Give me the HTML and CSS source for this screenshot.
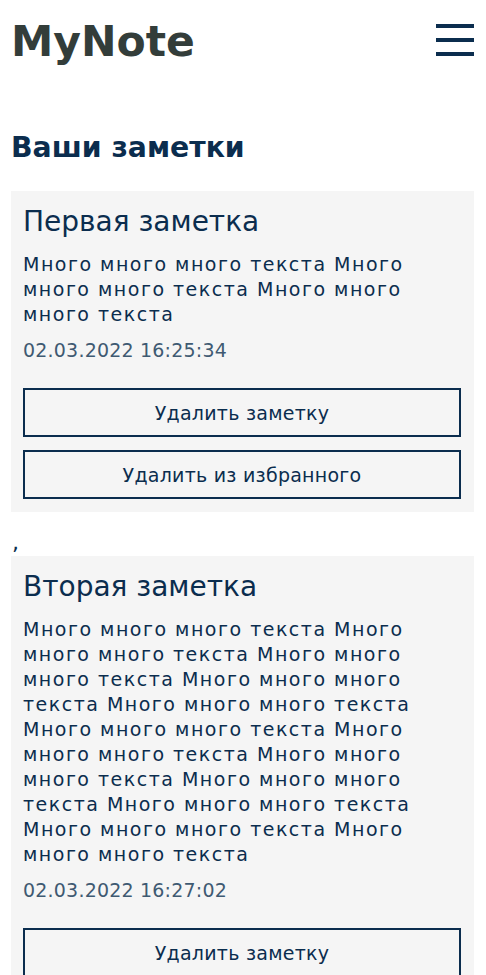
FILE: index.html
```html
<!DOCTYPE html>
<html lang="ru">
<head>
<meta charset="utf-8">
<title>MyNote</title>
<link rel="stylesheet" href="styles.css">
</head>
<body>
<header class="header">
  <h1 class="logo">MyNote</h1>
  <button class="burger" aria-label="Меню">
    <span class="burger-line"></span>
    <span class="burger-line"></span>
    <span class="burger-line"></span>
  </button>
</header>
<main class="content">
  <h2 class="section-title">Ваши заметки</h2>
  <div class="notes">
    <article class="note">
      <h3 class="note-title">Первая заметка</h3>
      <p class="note-text">Много много много текста Много много много текста Много много много текста</p>
      <p class="note-date">02.03.2022 16:25:34</p>
      <div class="note-actions">
        <button class="btn">Удалить заметку</button>
        <button class="btn">Удалить из избранного</button>
      </div>
    </article>
    <span class="sep">,</span>
    <article class="note">
      <h3 class="note-title">Вторая заметка</h3>
      <p class="note-text">Много много много текста Много много много текста Много много много текста Много много много текста Много много много текста Много много много текста Много много много текста Много много много текста Много много много текста Много много много текста Много много много текста Много много много текста</p>
      <p class="note-date">02.03.2022 16:27:02</p>
      <div class="note-actions">
        <button class="btn">Удалить заметку</button>
      </div>
    </article>
  </div>
</main>
</body>
</html>
```
FILE: styles.css
```css
* { box-sizing: border-box; }
html, body { margin: 0; padding: 0; background: #fff; }
body {
  font-family: "DejaVu Sans", Verdana, sans-serif;
  color: #0b2d4e;
}
.header {
  display: flex;
  justify-content: space-between;
  align-items: flex-start;
  padding: 14px 12px 0 11px;
}
.logo {
  margin: 0;
  font-size: 42.5px;
  line-height: 56px;
  font-weight: bold;
  color: #333d3a;
}
.burger {
  border: 0;
  background: transparent;
  padding: 0;
  margin-top: 10px;
  width: 38px;
  display: flex;
  flex-direction: column;
  gap: 10px;
  cursor: pointer;
}
.burger-line {
  display: block;
  width: 38px;
  height: 4px;
  background: #0b2d4e;
}
.content {
  padding: 0 12px 0 11px;
}
.section-title {
  margin: 60px 0 25px;
  font-size: 28.3px;
  line-height: 36px;
  font-weight: bold;
  color: #0b2d4e;
}
.notes {
  display: flex;
  flex-direction: column;
}
.note {
  background: #f5f5f5;
  padding: 12px 13px 13px 12px;
}
.note-title {
  margin: 0 0 11px;
  font-size: 28px;
  line-height: 38px;
  font-weight: normal;
  color: #0b2d4e;
}
.note-text {
  margin: 0;
  font-size: 19px;
  line-height: 25px;
  letter-spacing: 1.5px;
  color: #0b2d4e;
}
.note-date {
  margin: 11px 0 25px;
  font-size: 19px;
  line-height: 25px;
  letter-spacing: 0.2px;
  color: #3f5a72;
}
.note-actions {
  display: flex;
  flex-direction: column;
  gap: 13px;
}
.btn {
  font-family: inherit;
  font-size: 19px;
  letter-spacing: 0.25px;
  color: #0b2d4e;
  background: transparent;
  border: 2px solid #0b2d4e;
  height: 49px;
  width: 100%;
  padding: 0;
  cursor: pointer;
}
.sep {
  display: block;
  font-size: 22px;
  line-height: 22px;
  height: 44px;
  padding-top: 20px;
  padding-left: 1px;
  color: #0b2d4e;
}
```
